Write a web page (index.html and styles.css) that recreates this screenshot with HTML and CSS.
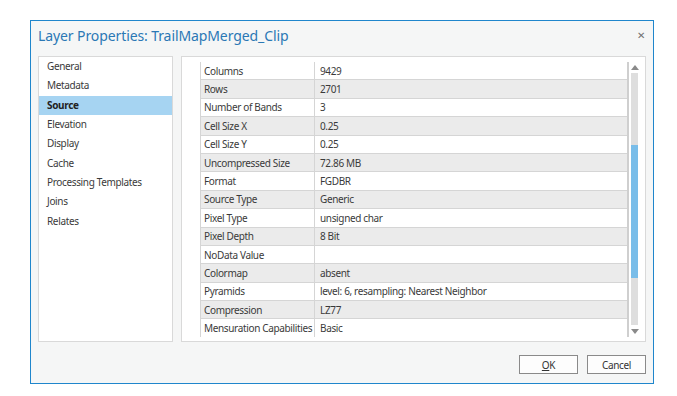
FILE: index.html
```html
<!DOCTYPE html>
<html lang="en">
<head>
  <meta charset="UTF-8">
  <title>Layer Properties</title>
  <link rel="stylesheet" href="styles.css">
</head>
<body>
  <div class="dialog">
    <div class="title-bar">
      <span class="title">Layer Properties: TrailMapMerged_Clip</span>
      <span class="close">&#x2715;</span>
    </div>
    <div class="panels">
      <ul class="nav">
        <li>General</li>
        <li>Metadata</li>
        <li class="selected">Source</li>
        <li>Elevation</li>
        <li>Display</li>
        <li>Cache</li>
        <li>Processing Templates</li>
        <li>Joins</li>
        <li>Relates</li>
      </ul>
      <div class="content">
        <table class="props">
          <tr><td>Columns</td><td>9429</td></tr>
          <tr><td>Rows</td><td>2701</td></tr>
          <tr><td>Number of Bands</td><td>3</td></tr>
          <tr><td>Cell Size X</td><td>0.25</td></tr>
          <tr><td>Cell Size Y</td><td>0.25</td></tr>
          <tr><td>Uncompressed Size</td><td>72.86 MB</td></tr>
          <tr><td>Format</td><td>FGDBR</td></tr>
          <tr><td>Source Type</td><td>Generic</td></tr>
          <tr><td>Pixel Type</td><td>unsigned char</td></tr>
          <tr><td>Pixel Depth</td><td>8 Bit</td></tr>
          <tr><td>NoData Value</td><td></td></tr>
          <tr><td>Colormap</td><td>absent</td></tr>
          <tr><td>Pyramids</td><td>level: 6, resampling: Nearest Neighbor</td></tr>
          <tr><td>Compression</td><td>LZ77</td></tr>
          <tr><td>Mensuration Capabilities</td><td>Basic</td></tr>
        </table>
        <div class="scrollbar">
          <span class="arrow up"></span>
          <div class="track">
            <div class="thumb"></div>
          </div>
          <span class="arrow down"></span>
        </div>
      </div>
    </div>
    <div class="footer">
      <button><u>O</u>K</button>
      <button>Cancel</button>
    </div>
  </div>
</body>
</html>
```

FILE: styles.css
```css
body {
  margin: 0;
  background: #fff;
  font-family: "Noto Sans", "Open Sans", sans-serif;
  font-size: 10px;
  letter-spacing: -0.35px;
  color: #333;
}
.dialog {
  box-sizing: border-box;
  width: 624px;
  height: 364px;
  margin: 20px 0 0 30px;
  padding: 0 7px;
  border: 1px solid #1f86cc;
  background: #f5f6f6;
}
.title-bar {
  display: flex;
  justify-content: space-between;
  align-items: center;
  height: 35px;
  padding-bottom: 7px;
  box-sizing: border-box;
}
.title {
  color: #2b78b5;
  font-size: 14px;
  letter-spacing: -0.1px;
}
.close {
  color: #707070;
  font-size: 10px;
  margin-right: 1px;
}
.panels {
  display: flex;
  gap: 8px;
  height: 286px;
}
.nav {
  list-style: none;
  margin: 0;
  padding: 0;
  width: 135px;
  box-sizing: border-box;
  border: 1px solid #d9d9d9;
  background: #fff;
}
.nav li {
  height: 19.35px;
  line-height: 19px;
  padding-left: 8px;
  color: #3a3a3a;
}
.nav li.selected {
  background: #a6d4f2;
  font-weight: bold;
  color: #222;
}
.content {
  flex: 1;
  box-sizing: border-box;
  border: 1px solid #d9d9d9;
  background: #fff;
  display: flex;
  padding: 5px 7px 4px 18px;
}
.props {
  flex: 1;
  border-collapse: collapse;
  align-self: flex-start;
  border-left: 1px solid #d5d5d5;
  border-right: 2px solid #cfcfcf;
}
.props td {
  height: 17.4px;
  padding: 0 0 0 3px;
  border-bottom: 1px solid #d5d5d5;
  white-space: nowrap;
  color: #3a3a3a;
}
.props tr:last-child td {
  border-bottom: none;
}
.props td:first-child {
  width: 110px;
  border-right: 1px solid #d5d5d5;
}
.props td:last-child {
  padding-left: 5px;
}
.props tr:nth-child(even) td {
  background: #ebebeb;
}
.scrollbar {
  width: 7px;
  margin-left: 2px;
  display: flex;
  flex-direction: column;
  align-items: center;
}
.arrow {
  width: 0;
  height: 0;
  border-left: 4px solid transparent;
  border-right: 4px solid transparent;
  margin: 3px 0;
}
.arrow.up {
  border-bottom: 5px solid #8a8a8a;
}
.arrow.down {
  border-top: 5px solid #8a8a8a;
}
.track {
  flex: 1;
  width: 7px;
  background: #dedede;
  padding-top: 72px;
  box-sizing: border-box;
  margin-bottom: 1px;
}
.thumb {
  height: 133px;
  background: #79bde9;
}
.footer {
  display: flex;
  justify-content: flex-end;
  gap: 9px;
  padding: 13px 0 0;
}
button {
  width: 59px;
  height: 19px;
  padding: 0;
  font-family: inherit;
  font-size: 10px;
  letter-spacing: inherit;
  color: #333;
  background: #fdfdfd;
  border: 1px solid #8a8a8a;
  border-radius: 0;
}
```
